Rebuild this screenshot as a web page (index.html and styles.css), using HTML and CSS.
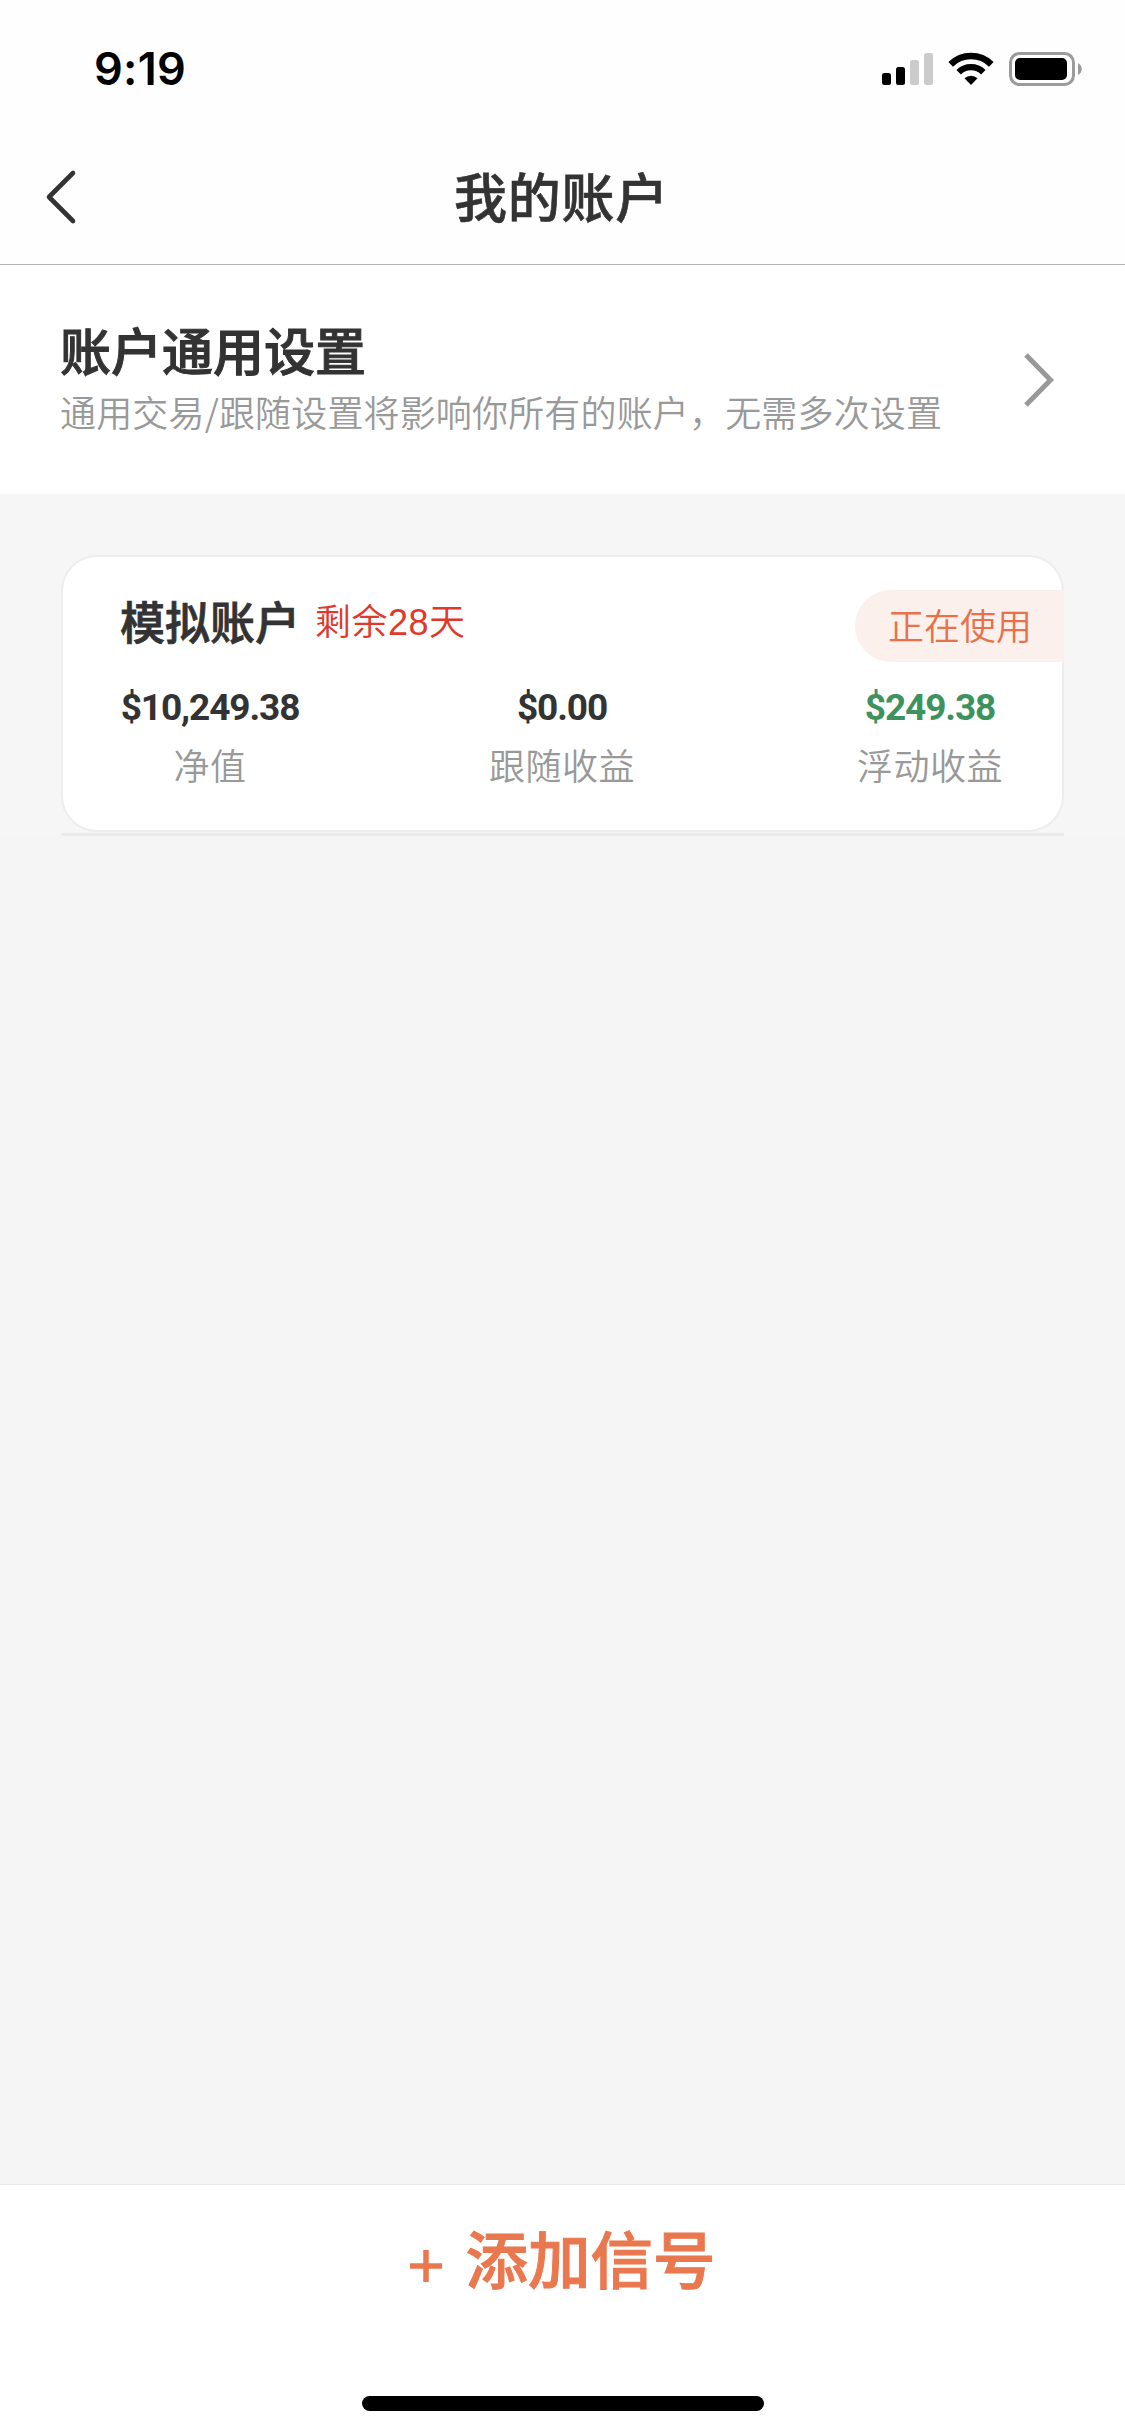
FILE: index.html
```html
<!DOCTYPE html>
<html lang="zh-CN">
<head>
<meta charset="utf-8">
<title>我的账户</title>
<link rel="stylesheet" href="styles.css">
</head>
<body>
<div class="screen">
  <div class="status">
    <span class="time">9:19</span>
    <svg class="status-icons" width="201" height="34" viewBox="0 0 201 34">
      <rect x="0" y="21" width="9" height="12" rx="2.5"/>
      <rect x="14" y="15" width="9" height="18" rx="2.5"/>
      <rect x="28" y="8" width="9" height="25" rx="2.5" fill="#cbcbcb"/>
      <rect x="42" y="1" width="9" height="32" rx="2.5" fill="#cbcbcb"/>
      <path d="M89 33l-6.5-6.700a9.500 9.500 0 0 1 13 0z"/>
      <path d="M76.700 20.200a17.500 17.500 0 0 1 24.600 0" fill="none" stroke="#000" stroke-width="6.400"/>
      <path d="M68.700 12.300a29 29 0 0 1 40.600 0" fill="none" stroke="#000" stroke-width="6.600"/>
      <rect x="128.500" y="1.500" width="63" height="31" rx="9" fill="none" stroke="#9b9b9b" stroke-width="3"/>
      <rect x="133" y="6" width="52" height="22" rx="5"/>
      <path d="M196 11c5 2.500 5 9.500 0 12z" fill="#9b9b9b"/>
    </svg>
  </div>
  <header class="nav">
    <svg class="back" width="32" height="56" viewBox="0 0 32 56"><path d="M28 4L4 28L28 52" fill="none" stroke="#333" stroke-width="4.600" stroke-linecap="round" stroke-linejoin="round"/></svg>
    <h1>我的账户</h1>
  </header>
  <section class="settings">
    <div>
      <h2>账户通用设置</h2>
      <p>通用交易/跟随设置将影响你所有的账户，无需多次设置</p>
    </div>
    <svg width="34" height="58" viewBox="0 0 34 58"><path d="M4 4L28.500 29L4 54" fill="none" stroke="#999" stroke-width="5"/></svg>
  </section>
  <main class="content">
    <article class="card">
      <div class="card-head">
        <h3>模拟账户</h3>
        <span class="remain">剩余28天</span>
        <span class="badge">正在使用</span>
      </div>
      <dl class="stats">
        <div class="stat"><dd>$10,249.38</dd><dt>净值</dt></div>
        <div class="stat"><dd>$0.00</dd><dt>跟随收益</dt></div>
        <div class="stat"><dd class="gain">$249.38</dd><dt>浮动收益</dt></div>
      </dl>
    </article>
    <div class="rule"></div>
  </main>
  <footer class="footer">
    <div class="add">
      <svg width="32" height="32" viewBox="0 0 32 32"><path d="M0 16H32M16 0V32" stroke="#ea784f" stroke-width="5.500"/></svg>
      <span>添加信号</span>
    </div>
    <div class="home"></div>
  </footer>
</div>
</body>
</html>
```
FILE: styles.css
```css
* { box-sizing: border-box; margin: 0; padding: 0; }
body { font-family: "Liberation Sans", "Noto Sans CJK SC", sans-serif; color: #333; }
.screen { width: 1125px; height: 2436px; display: flex; flex-direction: column; background: #f5f5f5; }
.status { height: 132px; background: #fefefe; display: flex; justify-content: space-between; align-items: flex-start; padding: 52px 42px 0 94px; }
.time { font: 600 45px/34px Inter, sans-serif; color: #000; letter-spacing: 0.300px; }
.nav { height: 133px; background: #fefefe; border-bottom: 1px solid #b2b2b2; display: grid; grid-template-columns: 45px 32px 1fr 77px; align-items: center; }
.back { grid-column: 2; margin-top: -2px; }
.nav h1 { font-size: 53px; font-weight: 500; line-height: 80px; text-align: center; letter-spacing: 0.700px; margin: 4px 0 0 -2px; -webkit-text-stroke: 0.600px; }
.settings { height: 229px; background: #fff; display: flex; justify-content: space-between; padding: 51px 69px 0 60px; }
.settings h2 { font-size: 51px; font-weight: 500; line-height: 76px; -webkit-text-stroke: 1px; }
.settings p { font-family: "Noto Sans CJK SC", sans-serif; font-size: 36px; font-weight: 350; line-height: 54px; margin-top: -8px; letter-spacing: 0.160px; color: #999; white-space: nowrap; }
.settings svg { margin-top: 35px; }
.content { flex: 1; padding: 61px 61px 0; background: linear-gradient(#f6f6f6 341px, #f5f5f5 341px); }
.card { height: 277px; border: 2px solid #ededed; border-radius: 36px; background: #fff; padding: 33px 0 0 58px; }
.card-head { display: flex; height: 72px; margin-right: -2px; }
.card h3 { font-size: 45px; font-weight: 500; line-height: 70px; margin-left: -1px; -webkit-text-stroke: 0.800px; }
.remain { font-size: 36px; font-weight: 350; line-height: 66px; color: #e0392b; margin-left: 15px; letter-spacing: 0.500px; }
.badge { margin-left: auto; width: 209px; height: 72px; border-radius: 36px 0 0 36px; background: #fbf0ec; color: #e8714a; font-size: 36px; font-weight: 350; line-height: 76px; padding-left: 33px; }
.stats { display: grid; grid-template-columns: 180px 1fr 146px; padding: 21px 59px 0 0; margin-left: -1px; }
.stat { display: flex; flex-direction: column; align-items: center; }
.stat:nth-child(2) { padding-right: 33px; }
.stat dd { font: 700 37px/50px Roboto, sans-serif; letter-spacing: -1.100px; }
.stat dd.gain { color: #3e925e; }
.stat dt { font-size: 36px; font-weight: 350; line-height: 54px; color: #999; letter-spacing: 0.500px; margin-top: 8px; }
.rule { height: 3px; margin-top: 1px; background: #ebebeb; }
.footer { height: 252px; background: #fff; border-top: 1px solid #e8e8e8; display: flex; flex-direction: column; align-items: center; }
.add { display: flex; align-items: center; gap: 24px; color: #ea784f; font-size: 62.500px; font-weight: 500; line-height: 94px; margin: 30px 0 0; height: 94px; -webkit-text-stroke: 1px; }
.add svg { margin-top: 7px; }
.home { width: 402px; height: 15px; border-radius: 8px; background: #000; margin-top: 87px; }
```
